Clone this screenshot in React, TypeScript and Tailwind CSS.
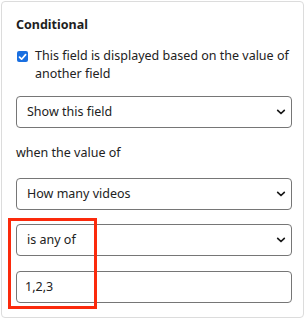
import React from "react";

function Chevron() {
  return (
    <svg width="10" height="6" viewBox="0 0 10 6" className="absolute right-[5px] top-1/2 -translate-y-1/2">
      <path d="M1.7 1.3 L5 4.5 L8.3 1.3" fill="none" stroke="#1a1a1a" strokeWidth="1.7" strokeLinecap="round" strokeLinejoin="round" />
    </svg>
  );
}

function FakeSelect({ label }: { label: string }) {
  return (
    <div className="relative h-[32px] w-full rounded-[4px] border border-[#767676] bg-white flex items-center pl-[10px] text-[12.5px] text-[#222]">
      {label}
      <Chevron />
    </div>
  );
}

export default function App() {
  return (
    <div className="w-[306px] h-[320px] bg-white pt-px pl-px" style={{ fontFamily: '"Noto Sans", "Open Sans", sans-serif' }}>
      <div className="w-[303px] h-[317px] rounded-[4px] border border-[#dcdcdc] pl-[14px] pr-[11px] pt-[14px]">
        <div className="text-[12.5px] leading-[18px] font-bold text-[#1e1e1e]">Conditional</div>
        <div className="mt-[13px] flex items-start gap-[7px] text-[12.5px] leading-[18px] text-[#222]">
          <span className="mt-[4px] flex h-[11px] w-[11px] shrink-0 items-center justify-center rounded-[2px] bg-[#1a6fe0] ml-px">
            <svg width="9" height="8" viewBox="0 0 9 8">
              <path d="M1.5 4.2 L3.6 6.2 L7.6 1.6" fill="none" stroke="white" strokeWidth="1.7" strokeLinecap="round" strokeLinejoin="round" />
            </svg>
          </span>
          <span>This field is displayed based on the value of another field</span>
        </div>
        <div className="mt-[13px]">
          <FakeSelect label="Show this field" />
        </div>
        <div className="mt-[16px] text-[12.5px] leading-[18px] text-[#222]">when the value of</div>
        <div className="mt-[16px]">
          <FakeSelect label="How many videos" />
        </div>
        <div className="relative mt-[14px]">
          <FakeSelect label="is any of" />
          <div className="mt-[15px] h-[32px] w-full rounded-[4px] border border-[#767676] bg-white flex items-center pl-[8px] text-[12.5px] text-[#222]">
            1,2,3
          </div>
          <div className="absolute left-[-8px] top-[-6px] bottom-[-6px] w-[89px] border-[3px] border-[#fb2a0c]" />
        </div>
      </div>
    </div>
  );
}
